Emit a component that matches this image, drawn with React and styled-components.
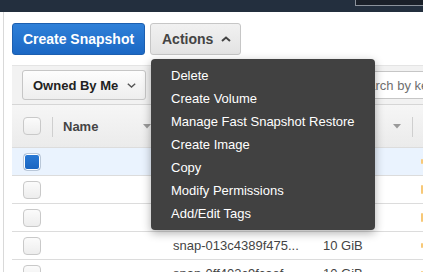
import React from "react";
import styled, { createGlobalStyle } from "styled-components";

const GlobalStyle = createGlobalStyle`
  html, body {
    margin: 0;
    padding: 0;
    background: #fff;
    overflow: hidden;
  }
  body {
    font-family: "Liberation Sans", Arial, sans-serif;
    color: #444;
  }
`;

// Top navigation strip
const Nav = styled.div`
  height: 12px;
  background: #232f3e;
  display: flex;
  justify-content: flex-end;
  align-items: flex-start;
`;

const NavBox = styled.div`
  width: 67px;
  height: 5px;
  background: #1a2029;
  border: 1px solid #8b929b;
  border-top: none;
  border-right: none;
`;

const Page = styled.div`
  margin-left: 3px;
  border-left: 1px solid #d9d9d9;
  padding: 11px 0 0 8px;
  height: 260px;
  box-sizing: border-box;
`;

const ButtonBar = styled.div`
  display: flex;
  gap: 5px;
  align-items: center;
`;

const PrimaryButton = styled.button`
  height: 32px;
  width: 133px;
  border: 1px solid #1c5fb0;
  border-radius: 3px;
  background: linear-gradient(#2f80d8, #1b68c4);
  color: #fff;
  font-family: "Liberation Sans", Arial, sans-serif;
  font-weight: bold;
  font-size: 14px;
  padding: 0;
`;

const ActionsWrap = styled.div`
  position: relative;
`;

const SecondaryButton = styled.button`
  height: 32px;
  width: 91px;
  border: 1px solid #c6c6c6;
  border-radius: 3px;
  background: linear-gradient(#f1f1f1, #e3e3e3);
  color: #444;
  font-family: "Liberation Sans", Arial, sans-serif;
  font-weight: bold;
  font-size: 14px;
  display: flex;
  align-items: center;
  padding: 0 0 0 11px;
  gap: 8px;
`;

const Menu = styled.ul`
  position: absolute;
  top: 36px;
  left: 1px;
  width: 224px;
  margin: 0;
  padding: 5px 0;
  list-style: none;
  background: #414141;
  border-radius: 4px;
  box-shadow: 0 3px 10px rgba(0, 0, 0, 0.32);
  z-index: 10;
`;

const MenuItem = styled.li`
  height: 23px;
  line-height: 23px;
  padding-left: 20px;
  color: #fff;
  font-size: 13px;
  white-space: nowrap;
`;

const Table = styled.div`
  margin-top: 10px;
`;

const Toolbar = styled.div`
  height: 40px;
  box-sizing: border-box;
  background: #f2f2f2;
  border-top: 1px solid #e4e4e4;
  border-bottom: 1px solid #d6d6d6;
  display: flex;
  align-items: center;
  padding: 0 0 0 10px;
  gap: 6px;
`;

const Dropdown = styled.div`
  width: 124px;
  height: 30px;
  box-sizing: border-box;
  border: 1px solid #c6c6c6;
  border-radius: 3px;
  background: linear-gradient(#fdfdfd, #eeeeee);
  display: flex;
  align-items: center;
  padding-left: 10px;
  gap: 9px;
  font-weight: bold;
  font-size: 13px;
  color: #222;
`;

const Search = styled.div`
  flex: 1;
  min-width: 0;
  height: 28px;
  box-sizing: border-box;
  border: 1px solid #c6c6c6;
  border-right: none;
  border-radius: 2px 0 0 2px;
  background: #fff;
  display: flex;
  align-items: center;
  padding-left: 12px;
  gap: 14px;
  font-size: 13px;
  color: #6f6f6f;
  white-space: nowrap;
  overflow: hidden;
`;

const cols = "40px 110px 150px 100px 1fr";

const HeaderRow = styled.div`
  display: grid;
  grid-template-columns: ${cols};
  height: 43px;
  background: linear-gradient(#f6f6f6, #ebebeb);
  border-bottom: 1px solid #dcdcdc;
  box-sizing: border-box;
`;

const HeadCell = styled.div`
  position: relative;
  display: flex;
  align-items: center;
  justify-content: space-between;
  padding: 0 11px 0 11px;
  font-weight: bold;
  font-size: 13px;
  color: #444;

  ${(p) =>
    p.$divider &&
    `&::before {
      content: "";
      position: absolute;
      left: 0;
      top: 12px;
      height: 20px;
      border-left: 1px solid #cfcfcf;
    }`}
`;

const Row = styled.div`
  display: grid;
  grid-template-columns: ${cols};
  height: 28px;
  box-sizing: border-box;
  border-bottom: 1px solid #dcdcdc;
  background: ${(p) => (p.$selected ? "#eaf3fe" : "#fff")};
`;

const Cell = styled.div`
  display: flex;
  align-items: center;
  padding-left: ${(p) => p.$pad || 11}px;
  font-size: 13px;
  color: #444;
  white-space: nowrap;
  overflow: hidden;
`;

const Check = styled.span`
  width: 18px;
  height: 18px;
  box-sizing: border-box;
  border-radius: 4px;
  border: 1px solid ${(p) => (p.$checked ? "#b9c7d8" : "#c9c9c9")};
  background: ${(p) =>
    p.$checked ? "linear-gradient(#2a7ad6, #1864c0)" : "linear-gradient(#fbfbfb, #ededed)"};
  box-shadow: ${(p) => (p.$checked ? "inset 0 0 0 1px #fff" : "none")};
`;

const Status = styled.span`
  width: 8px;
  height: ${(p) => (p.$tall ? 9 : 5)}px;
  border-radius: 3px;
  background: #f7c877;
`;

const UpCaret = () => (
  <svg width="10" height="6" viewBox="0 0 10 6">
    <polyline points="1,5 5,1.5 9,5" fill="none" stroke="#444" strokeWidth="2" />
  </svg>
);

const DownChevron = () => (
  <svg width="9" height="5" viewBox="0 0 9 5">
    <polyline points="0.8,0.8 4.5,4 8.2,0.8" fill="none" stroke="#555" strokeWidth="1.4" />
  </svg>
);

const SortCaret = () => (
  <svg width="8" height="5" viewBox="0 0 8 5">
    <polygon points="0,0 8,0 4,4.5" fill="#9a9a9a" />
  </svg>
);

const SearchIcon = () => (
  <svg width="13" height="13" viewBox="0 0 13 13">
    <circle cx="5.5" cy="5.5" r="4.2" fill="none" stroke="#777" strokeWidth="1.5" />
    <line x1="8.6" y1="8.6" x2="12" y2="12" stroke="#777" strokeWidth="1.6" />
  </svg>
);

const menuItems = [
  "Delete",
  "Create Volume",
  "Manage Fast Snapshot Restore",
  "Create Image",
  "Copy",
  "Modify Permissions",
  "Add/Edit Tags",
];

const rows = [
  { id: "snap-0a91c2d7e0b4...", size: "8 GiB", selected: true, tall: false },
  { id: "snap-07be5f1c93a2...", size: "8 GiB", tall: true },
  { id: "snap-0c4d2a8e71f6...", size: "20 GiB", tall: true },
  { id: "snap-013c4389f475...", size: "10 GiB" },
  { id: "snap-0ff403c9fcaef...", size: "10 GiB" },
];

export default function App() {
  return (
    <>
      <GlobalStyle />
      <Nav>
        <NavBox />
      </Nav>
      <Page>
        <ButtonBar>
          <PrimaryButton>Create Snapshot</PrimaryButton>
          <ActionsWrap>
            <SecondaryButton>
              Actions <UpCaret />
            </SecondaryButton>
            <Menu>
              {menuItems.map((m) => (
                <MenuItem key={m}>{m}</MenuItem>
              ))}
            </Menu>
          </ActionsWrap>
        </ButtonBar>

        <Table>
          <Toolbar>
            <Dropdown>
              Owned By Me <DownChevron />
            </Dropdown>
            <Search>
              <SearchIcon />
              Filter by tags and attributes or search by keyword
            </Search>
          </Toolbar>

          <HeaderRow>
            <HeadCell>
              <Check />
            </HeadCell>
            <HeadCell $divider>
              Name <SortCaret />
            </HeadCell>
            <HeadCell $divider>
              Snapshot ID <SortCaret />
            </HeadCell>
            <HeadCell $divider>
              Size <SortCaret />
            </HeadCell>
            <HeadCell $divider />
          </HeaderRow>

          {rows.map((r) => (
            <Row key={r.id} $selected={r.selected}>
              <Cell>
                <Check $checked={r.selected} />
              </Cell>
              <Cell />
              <Cell>{r.id}</Cell>
              <Cell>{r.size}</Cell>
              <Cell $pad={9}>
                <Status $tall={r.tall} />
              </Cell>
            </Row>
          ))}
        </Table>
      </Page>
    </>
  );
}
